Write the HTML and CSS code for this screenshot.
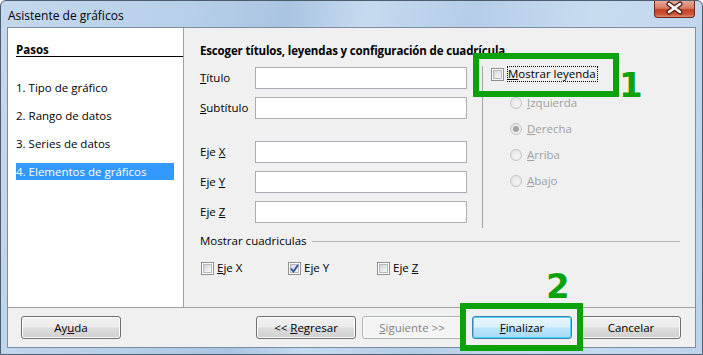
FILE: index.html
```html
<!DOCTYPE html>
<html lang="es">
<head>
  <meta charset="UTF-8">
  <title>Asistente de gráficos</title>
  <link rel="stylesheet" href="styles.css">
</head>
<body>
  <div class="window">
    <div class="titlebar">
      <span class="title">Asistente de gráficos</span>
      <span class="close">
        <svg width="41" height="17" viewBox="0 0 41 17">
          <path d="M15 4 L26 12 M26 4 L15 12" stroke="#4a1c12" stroke-width="5" stroke-linecap="round"/>
          <path d="M15 4 L26 12 M26 4 L15 12" stroke="#ffffff" stroke-width="2.6" stroke-linecap="round"/>
        </svg>
      </span>
    </div>

    <div class="client">
      <div class="main">
        <!-- pasos del asistente -->
        <div class="steps">
          <div class="steps-head">Pasos</div>
          <ul class="step-list">
            <li>1. Tipo de gráfico</li>
            <li>2. Rango de datos</li>
            <li>3. Series de datos</li>
            <li class="current">4. Elementos de gráficos</li>
          </ul>
        </div>

        <div class="page">
          <div class="page-title">Escoger títulos, leyendas y configuración de cuadrícula</div>
          <div class="page-row">
            <div class="titles">
              <label class="field-label"><u>T</u>ítulo</label>
              <input class="field" type="text">
              <label class="field-label"><u>S</u>ubtítulo</label>
              <input class="field" type="text">
              <label class="field-label gap">Eje <u>X</u></label>
              <input class="field gap" type="text">
              <label class="field-label">Eje <u>Y</u></label>
              <input class="field" type="text">
              <label class="field-label">Eje <u>Z</u></label>
              <input class="field" type="text">
            </div>

            <div class="legend">
              <div class="check-row">
                <span class="check"></span>
                <span class="focus"><u>M</u>ostrar leyenda</span>
              </div>
              <div class="radio-row first"><span class="radio"></span><span><u>I</u>zquierda</span></div>
              <div class="radio-row"><span class="radio on"></span><span><u>D</u>erecha</span></div>
              <div class="radio-row"><span class="radio"></span><span><u>A</u>rriba</span></div>
              <div class="radio-row"><span class="radio"></span><span><u>A</u>bajo</span></div>
            </div>
          </div>

          <div class="grid-head">
            <span>Mostrar cuadriculas</span>
            <span class="rule"></span>
          </div>
          <div class="grid-checks">
            <div class="grid-item axis-x"><span class="check"></span><span><u>E</u>je X</span></div>
            <div class="grid-item axis-y">
              <span class="check checked">
                <svg width="9" height="9" viewBox="0 0 9 9"><path d="M1 4.5 L3.5 7.5 L8 1" fill="none" stroke="#2a4f9c" stroke-width="1.8"/></svg>
              </span>
              <span>E<u>j</u>e Y</span>
            </div>
            <div class="grid-item"><span class="check"></span><span>Eje <u>Z</u></span></div>
          </div>
        </div>
      </div>

      <div class="buttons">
        <button class="btn help">Ay<u>u</u>da</button>
        <button class="btn back">&lt;&lt; <u>R</u>egresar</button>
        <button class="btn next" disabled><u>S</u>iguiente &gt;&gt;</button>
        <button class="btn finish"><u>F</u>inalizar</button>
        <button class="btn cancel">Cancelar</button>
      </div>
    </div>

    <!-- marcas verdes -->
    <div class="mark mark-one"></div>
    <div class="mark-num num-one">1</div>
    <div class="mark mark-two"></div>
    <div class="mark-num num-two">2</div>
  </div>
</body>
</html>
```

FILE: styles.css
```css
body {
  margin: 0;
  font-family: "Open Sans", "Noto Sans", sans-serif;
  font-size: 11.5px;
  color: #000;
  background: #fff;
}
.window {
  position: relative;
  width: 703px;
  height: 355px;
  box-sizing: border-box;
  border: 1px solid #4d5d70;
  border-radius: 6px 6px 0 0;
  background: linear-gradient(100deg, #c4d8ee 0%, #b7cfe8 25%, #a9c4e2 38%, #c6daef 48%, #b5cde7 62%, #c8dcf0 78%, #bdd3eb 100%);
  padding: 0 6px 7px 6px;
}
.titlebar {
  height: 26px;
  display: flex;
  justify-content: space-between;
  align-items: flex-start;
}
.title {
  margin: 6px 0 0 1px;
  font-size: 12px;
}
.close {
  width: 41px;
  height: 17px;
  margin-right: 1px;
  border: 1px solid #6e2a1d;
  border-top: 0;
  border-radius: 0 0 4px 4px;
  background: linear-gradient(#e8ab9a 0%, #d77a63 45%, #c23f22 55%, #cf5a3c 85%, #e08b70 100%);
  box-sizing: border-box;
}
.close svg {
  display: block;
  margin: -1px 0 0 -1px;
}
.client {
  border: 1px solid #7d8da1;
  background: #f0f0f0;
  height: 321px;
  box-sizing: border-box;
  display: flex;
  flex-direction: column;
}
.main {
  display: flex;
  height: 279px;
  border-bottom: 1px solid #a0a0a0;
}
.steps {
  background: #fff;
  border-right: 1px solid #a0a0a0;
  padding: 15px 0 0 8px;
  width: 167px;
}
.steps-head {
  font-weight: bold;
  line-height: 13px;
  height: 13px;
  border-bottom: 1px solid #000;
}
.step-list {
  list-style: none;
  margin: 22px 0 0 0;
  padding: 0;
}
.step-list li {
  line-height: 17px;
  margin: 0 9px 11px 0;
}
.step-list li.current {
  background: #3399ff;
  color: #fff;
}
.page {
  flex: 1;
  padding: 15px 15px 0 16px;
}
.page-title {
  font-weight: bold;
  line-height: 16px;
  margin-bottom: 8px;
  white-space: nowrap;
  letter-spacing: -0.15px;
}
.page-row {
  display: flex;
  align-items: flex-start;
}
.titles {
  display: grid;
  grid-template-columns: 55px 212px;
  row-gap: 8px;
}
.field-label {
  line-height: 22px;
  height: 22px;
}
.field-label.gap,
.field.gap {
  margin-top: 14px;
}
.field {
  height: 22px;
  box-sizing: border-box;
  border: 1px solid #abadb3;
  background: #fff;
  margin: 0;
  padding: 0;
}
.legend {
  margin: -1px 0 0 15px;
  height: 162px;
  box-sizing: border-box;
  border-left: 1px solid #a5a5a5;
  padding-left: 8px;
}
.check-row,
.radio-row,
.grid-item {
  display: flex;
  align-items: center;
  line-height: 16px;
  white-space: nowrap;
}
.check {
  width: 13px;
  height: 13px;
  box-sizing: border-box;
  border: 1px solid #8e8f8f;
  background: #fff;
  margin-right: 3px;
  position: relative;
  flex: none;
}
.check::before {
  content: "";
  position: absolute;
  left: 1px;
  top: 1px;
  width: 9px;
  height: 9px;
  box-sizing: border-box;
  border: 1px solid #b5b9be;
  background: linear-gradient(135deg, #d3d6db, #f7f7f7);
}
.check.checked svg {
  position: absolute;
  left: 1px;
  top: 1px;
}
.focus {
  border: 1px dotted #000;
  padding: 0 1px 0 0;
  line-height: 14px;
}
.radio-row {
  padding-left: 19px;
  margin-top: 10px;
  color: #a0a0a0;
}
.radio-row.first {
  margin-top: 13px;
}
.radio {
  width: 12px;
  height: 12px;
  box-sizing: border-box;
  border-radius: 50%;
  border: 1px solid #c4c4c4;
  background: radial-gradient(circle at 60% 60%, #f4f4f4, #e2e2e2);
  margin-right: 5px;
  position: relative;
  flex: none;
}
.radio.on::after {
  content: "";
  position: absolute;
  left: 2px;
  top: 2px;
  width: 6px;
  height: 6px;
  border-radius: 50%;
  background: #a3a3a3;
}
.grid-head {
  display: flex;
  align-items: center;
  line-height: 16px;
  margin-top: 5px;
}
.rule {
  flex: 1;
  border-top: 1px solid #b5b5b5;
  margin-left: 5px;
}
.grid-checks {
  display: flex;
  margin-top: 11px;
  padding-left: 1px;
}
.grid-item.axis-x {
  width: 87px;
}
.grid-item.axis-y {
  width: 89px;
}
.buttons {
  display: flex;
  align-items: flex-start;
  padding: 8px 14px 0 13px;
}
.btn {
  width: 100px;
  height: 23px;
  font-family: inherit;
  font-size: 11.5px;
  color: #000;
  border: 1px solid #707070;
  border-radius: 3px;
  background: linear-gradient(#f2f2f2 0%, #ebebeb 48%, #dddddd 52%, #cfcfcf 100%);
  box-shadow: inset 0 0 0 1px #fcfcfc;
  padding: 0;
}
.btn.back {
  margin-left: auto;
}
.btn.next {
  margin-left: 6px;
  color: #838383;
  border-color: #adb2b5;
  background: #f4f4f4;
}
.btn.finish {
  margin-left: 10px;
  border-color: #3c7fb1;
  background: linear-gradient(#eaf6fd 0%, #d9f0fc 48%, #bee6fd 52%, #a7d9f5 100%);
  box-shadow: inset 0 0 0 1px #48d8fb;
}
.btn.cancel {
  margin-left: 9px;
}
.mark {
  position: absolute;
  border: 6px solid #0ca20c;
  box-sizing: border-box;
}
.mark-one {
  left: 472px;
  top: 52px;
  width: 146px;
  height: 44px;
}
.mark-two {
  left: 459px;
  top: 302px;
  width: 123px;
  height: 48px;
}
.mark-num {
  position: absolute;
  font-family: "DejaVu Sans", sans-serif;
  font-weight: bold;
  font-size: 34px;
  line-height: 34px;
  color: #0ca20c;
}
.num-one {
  left: 618px;
  top: 67px;
}
.num-two {
  left: 545px;
  top: 268px;
}
```
